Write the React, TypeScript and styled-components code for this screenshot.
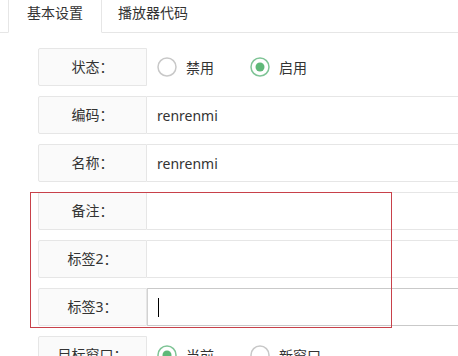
import React from "react";
import styled, { createGlobalStyle } from "styled-components";

const Global = createGlobalStyle`
  html, body { margin: 0; padding: 0; background: #fff; }
  body {
    font-family: "Noto Sans", "Noto Sans CJK SC", sans-serif;
    font-size: 14px;
    color: #333;
    overflow: hidden;
  }
`;

const Page = styled.div`
  position: relative;
  width: 458px;
  height: 356px;
  overflow: hidden;
`;

const TabBar = styled.ul`
  display: flex;
  margin: -8px 0 0 0;
  padding: 0 0 0 8px;
  list-style: none;
  height: 40px;
  border-bottom: 1px solid #e6e6e6;
`;

const Tab = styled.li<{ $active?: boolean }>`
  box-sizing: border-box;
  height: 41px;
  line-height: 40px;
  padding: 0 15px;
  min-width: 65px;
  text-align: center;
  color: #333;
  ${(p) =>
    p.$active
      ? `border: 1px solid #e6e6e6; border-bottom-color: #fff; width: 94px; border-radius: 2px 2px 0 0;`
      : `border: 1px solid transparent;`}
`;

const Form = styled.div`
  padding: 15px 0 0 38px;
`;

const Row = styled.div`
  display: flex;
  height: 38px;
  margin-bottom: 10px;
`;

const Label = styled.div`
  box-sizing: border-box;
  flex: 0 0 109px;
  height: 38px;
  line-height: 36px;
  border: 1px solid #e6e6e6;
  border-radius: 2px 0 0 2px;
  background: #fafafa;
  text-align: center;
  color: #333;
`;

const InputBox = styled.div<{ $focus?: boolean }>`
  box-sizing: border-box;
  flex: 1;
  height: 38px;
  display: flex;
  align-items: center;
  padding-left: 10px;
  border: 1px solid ${(p) => (p.$focus ? "#c9c9c9" : "#e6e6e6")};
  border-left: ${(p) => (p.$focus ? "1px solid #d2d2d2" : "none")};
  border-right: none;
  color: #333;
`;

const Caret = styled.span`
  display: inline-block;
  width: 1px;
  height: 19px;
  background: #000;
`;

const RadioGroup = styled.div`
  flex: 1;
  display: flex;
  align-items: center;
  padding-left: 10px;
`;

const RadioItem = styled.div`
  display: flex;
  align-items: center;
  gap: 9px;
  margin-right: 36px;
  color: #333;
`;

const Highlight = styled.div`
  position: absolute;
  left: 30px;
  top: 192px;
  width: 362px;
  height: 136px;
  box-sizing: border-box;
  border: 1.5px solid #c8414a;
  pointer-events: none;
`;

const RadioIcon = ({ checked }: { checked?: boolean }) => (
  <svg width="20" height="20" viewBox="0 0 20 20">
    <circle
      cx="10"
      cy="10"
      r="9"
      fill="#fff"
      stroke={checked ? "#7fc496" : "#c8c8c8"}
      strokeWidth="1.5"
    />
    {checked && <circle cx="10" cy="10" r="4.5" fill="#5FB878" />}
  </svg>
);

const Radio = ({ label, checked }: { label: string; checked?: boolean }) => (
  <RadioItem>
    <RadioIcon checked={checked} />
    <span>{label}</span>
  </RadioItem>
);

export default function App() {
  return (
    <Page>
      <Global />
      <TabBar>
        <Tab $active>基本设置</Tab>
        <Tab>播放器代码</Tab>
      </TabBar>
      <Form>
        <Row>
          <Label>状态：</Label>
          <RadioGroup>
            <Radio label="禁用" />
            <Radio label="启用" checked />
          </RadioGroup>
        </Row>
        <Row>
          <Label>编码：</Label>
          <InputBox>renrenmi</InputBox>
        </Row>
        <Row>
          <Label>名称：</Label>
          <InputBox>renrenmi</InputBox>
        </Row>
        <Row>
          <Label>备注：</Label>
          <InputBox />
        </Row>
        <Row>
          <Label>标签2：</Label>
          <InputBox />
        </Row>
        <Row>
          <Label>标签3：</Label>
          <InputBox $focus>
            <Caret />
          </InputBox>
        </Row>
        <Row>
          <Label>目标窗口：</Label>
          <RadioGroup>
            <Radio label="当前" checked />
            <Radio label="新窗口" />
          </RadioGroup>
        </Row>
      </Form>
      <Highlight />
    </Page>
  );
}
